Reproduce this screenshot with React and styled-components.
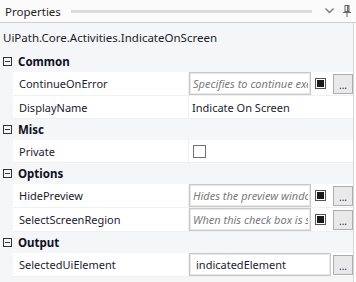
import styled, { createGlobalStyle } from "styled-components";

const GlobalStyle = createGlobalStyle`
  body {
    margin: 0;
    background: #ffffff;
    font-family: "Segoe UI", "Noto Sans", "Open Sans", sans-serif;
    font-size: 11px;
    color: #1b1b2e;
  }
`;

const sections = [
  {
    name: "Common",
    props: [
      { label: "ContinueOnError", kind: "input", hint: "Specifies to continue executing" },
      { label: "DisplayName", kind: "text", value: "Indicate On Screen" },
    ],
  },
  {
    name: "Misc",
    props: [{ label: "Private", kind: "check" }],
  },
  {
    name: "Options",
    props: [
      { label: "HidePreview", kind: "input", hint: "Hides the preview window" },
      { label: "SelectScreenRegion", kind: "input", hint: "When this check box is selected" },
    ],
  },
  {
    name: "Output",
    props: [{ label: "SelectedUiElement", kind: "output", value: "indicatedElement" }],
  },
];

const App = () => {
  return (
    <>
      <GlobalStyle />
      <Panel>
        <Header>
          <Title>Properties</Title>
          <Grip />
          <HeaderIcon>
            <svg width="9" height="6" viewBox="0 0 9 6">
              <path d="M0.5 0.5 L4.5 4.5 L8.5 0.5" fill="none" stroke="#777" strokeWidth="1.3" />
            </svg>
          </HeaderIcon>
          <HeaderIcon>
            <svg width="8" height="12" viewBox="0 0 8 12">
              <rect x="2" y="0.5" width="4" height="6" fill="none" stroke="#666" />
              <rect x="4" y="1" width="1.5" height="5.5" fill="#666" />
              <rect x="0" y="7" width="8" height="1" fill="#666" />
              <rect x="3.5" y="8" width="1" height="4" fill="#666" />
            </svg>
          </HeaderIcon>
        </Header>
        <Body>
          <TypeName>UiPath.Core.Activities.IndicateOnScreen</TypeName>
          {sections.map((s) => (
            <Section key={s.name}>
              <Category>
                <Toggle />
                <CatName>{s.name}</CatName>
              </Category>
              {s.props.map((p) => (
                <PropRow key={p.label} tall={p.kind === "input" || p.kind === "output"}>
                  <PropName>{p.label}</PropName>
                  <PropValue>
                    {p.kind === "input" && (
                      <>
                        <TextBox>
                          <Hint>{p.hint}</Hint>
                        </TextBox>
                        <Marker />
                        <Dots>...</Dots>
                      </>
                    )}
                    {p.kind === "text" && <Plain>{p.value}</Plain>}
                    {p.kind === "check" && <Check />}
                    {p.kind === "output" && (
                      <>
                        <TextBox wide>
                          <Plain>{p.value}</Plain>
                        </TextBox>
                        <Dots>...</Dots>
                      </>
                    )}
                  </PropValue>
                </PropRow>
              ))}
            </Section>
          ))}
        </Body>
      </Panel>
    </>
  );
};

export default App;

const Panel = styled.div`
  width: 356px;
  height: 282px;
  display: flex;
  flex-direction: column;
  overflow: hidden;
`;

const Header = styled.div`
  height: 22px;
  flex: none;
  display: flex;
  align-items: center;
  padding-left: 5px;
  border-bottom: 1px solid #cfcfcf;
  background: #fbfbfb;
`;

const Title = styled.span`
  font-size: 11.5px;
  color: #1e1e1e;
`;

const Grip = styled.div`
  flex: 1;
  height: 3px;
  margin: 0 8px 0 10px;
  background-image: radial-gradient(circle, #b8b8b8 0.6px, transparent 0.8px);
  background-size: 2px 2px;
`;

const HeaderIcon = styled.span`
  width: 18px;
  display: flex;
  justify-content: center;
  align-items: center;
`;

const Body = styled.div`
  flex: 1;
  width: 353px;
  background: #f5f6f7;
  border-right: 1px solid #d6d6d6;
  display: flex;
  flex-direction: column;
`;

const TypeName = styled.div`
  height: 28px;
  padding-left: 3px;
  display: flex;
  align-items: center;
  font-size: 11.5px;
`;

const Section = styled.div`
  display: flex;
  flex-direction: column;
`;

const Category = styled.div`
  height: 21px;
  display: flex;
  align-items: center;
  padding-left: 3px;
`;

const Toggle = styled.span`
  width: 9px;
  height: 9px;
  box-sizing: border-box;
  border: 1px solid #333;
  position: relative;
  margin-right: 6px;

  &::after {
    content: "";
    position: absolute;
    left: 1px;
    right: 1px;
    top: 3px;
    height: 1px;
    background: #333;
  }
`;

const CatName = styled.span`
  font-weight: 700;
  font-size: 11.5px;
  color: #0f0f1f;
`;

const PropRow = styled.div`
  height: ${(props) => (props.tall ? "23px" : "22px")};
  margin-left: 13px;
  background: #ffffff;
  border-bottom: 1px solid #f0f0f0;
  display: grid;
  grid-template-columns: 176px 1fr;
`;

const PropName = styled.div`
  padding-left: 6px;
  display: flex;
  align-items: center;
  border-right: 1px solid #f0f0f0;
`;

const PropValue = styled.div`
  display: flex;
  align-items: center;
`;

const TextBox = styled.div`
  width: ${(props) => (props.wide ? "142px" : "122px")};
  height: 23px;
  box-sizing: border-box;
  border: 1px solid #c9c9c9;
  box-shadow: inset 0 0 0 1px #e8e8e8;
  padding: 0 2px 0 3px;
  display: flex;
  align-items: center;
  overflow: hidden;
  white-space: nowrap;
  background: #fff;
`;

const Hint = styled.span`
  flex: 1;
  min-width: 0;
  overflow: hidden;
  font-style: italic;
  color: #7a7a7a;
`;

const Plain = styled.span`
  padding-left: 3px;
  white-space: nowrap;
`;

const Marker = styled.span`
  width: 11px;
  height: 11px;
  box-sizing: border-box;
  border: 1px solid #555;
  padding: 1px;
  margin-left: 4px;
  background: #fff;

  &::after {
    content: "";
    display: block;
    width: 100%;
    height: 100%;
    background: #1a1a1a;
  }
`;

const Dots = styled.span`
  width: 20px;
  height: 20px;
  box-sizing: border-box;
  margin-left: auto;
  border: 1px solid #adadad;
  background: #e9e9e9;
  display: flex;
  justify-content: center;
  align-items: flex-end;
  font-size: 10px;
  line-height: 10px;
  padding-bottom: 3px;
  color: #2d2d5a;
`;

const Check = styled.span`
  width: 13px;
  height: 13px;
  box-sizing: border-box;
  margin-left: 4px;
  border: 1px solid #707070;
  background: #fff;
`;
